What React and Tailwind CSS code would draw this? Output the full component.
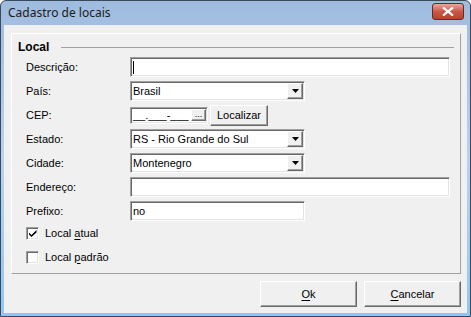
import React from "react";

const sunken =
  "bg-white border border-t-[#a0a0a0] border-l-[#a0a0a0] border-b-white border-r-white shadow-[inset_1px_1px_0_#696969,inset_-1px_-1px_0_#e3e3e3]";
const raised =
  "bg-[#f0f0f0] border border-t-white border-l-white border-b-[#696969] border-r-[#696969] shadow-[inset_-1px_-1px_0_#a0a0a0]";

function Arrow() {
  return (
    <svg width="7" height="4" viewBox="0 0 7 4">
      <polygon points="0,0 7,0 3.5,4" fill="#000" />
    </svg>
  );
}

function Select({ value, width = "w-[175px]" }) {
  return (
    <div className={`${sunken} ${width} h-[20px] flex items-center p-[1px]`}>
      <span className="flex-1 pl-[1px] leading-none">{value}</span>
      <div className={`${raised} w-[16px] h-[16px] flex items-center justify-center`}>
        <Arrow />
      </div>
    </div>
  );
}

function Row({ label, children, className = "" }) {
  return (
    <div className={`flex items-center h-[20px] ${className}`}>
      <span className="w-[104px]">{label}</span>
      {children}
    </div>
  );
}

function Checkbox({ checked, children }) {
  return (
    <div className="flex items-center h-[16px] gap-[6px]">
      <div className={`${sunken} w-[13px] h-[13px] flex items-center justify-center`}>
        {checked && (
          <svg width="8" height="8" viewBox="0 0 8 8">
            <path d="M0 3.5 L2.5 6 L7.5 1 L7.5 3.5 L2.5 8 L0 5.5 Z" fill="#000" />
          </svg>
        )}
      </div>
      <span>{children}</span>
    </div>
  );
}

export default function App() {
  return (
    <div className="w-[471px] h-[317px] font-['Liberation_Sans',Arial,sans-serif] text-[11px] text-black bg-white">
      <div className="w-full h-full flex flex-col border border-[#3a4a5c] rounded-t-[6px] bg-gradient-to-b from-[#9fbbde] via-[#b9d2ee] to-[#8ec8f0] px-[3px] pb-[3px]">
        {/* title bar */}
        <div className="h-[24px] flex items-center justify-between pl-[4px] pr-[3px]">
          <span className="font-['Noto_Sans',sans-serif] text-[12px] text-[#1b1b1b]">Cadastro de locais</span>
          <div className="w-[32px] h-[17px] mt-[-3px] rounded-[3px] border border-[#6e2a22] bg-gradient-to-b from-[#e5a79c] via-[#c9594a] to-[#b8412f] flex items-center justify-center">
            <svg width="12" height="9" viewBox="0 0 12 9">
              <path d="M1 0.5 L6 4.5 L11 0.5 M1 8.5 L6 4.5 L11 8.5" stroke="#fff" strokeWidth="2.2" fill="none" />
            </svg>
          </div>
        </div>

        {/* client area */}
        <div className="flex-1 bg-[#f0f0f0] flex flex-col">
          <div className="mt-[8px] mx-[7px] mr-[6px] h-[241px] border border-t-white border-l-white border-b-[#a0a0a0] border-r-[#a0a0a0] flex flex-col">
            <div className="flex items-center h-[14px] mt-[6px] pl-[6px] pr-[6px]">
              <span className="font-bold text-[12px] leading-none">Local</span>
              <div className="flex-1 ml-[12px] border-t border-[#a0a0a0]" />
            </div>

            <div className="flex flex-col gap-[4px] mt-[3px] pl-[14px]">
              <Row label="Descrição:">
                <div className={`${sunken} w-[320px] h-[20px] flex items-center pl-[2px]`}>
                  <div className="w-px h-[13px] bg-black" />
                </div>
              </Row>
              <Row label="País:">
                <Select value="Brasil" />
              </Row>
              <Row label="CEP:">
                <div className={`${sunken} w-[78px] h-[17px] flex items-center p-[1px]`}>
                  <span className="flex-1 min-w-0 overflow-hidden pl-[1px] leading-[13px] whitespace-pre">__.___-___</span>
                  <div className={`${raised} shrink-0 w-[15px] h-[12px] flex items-end justify-center text-[9px] leading-[9px] pb-[1px]`}>...</div>
                </div>
                <div className={`${raised} ml-[2px] w-[58px] h-[21px] flex items-center justify-center`}>
                  Localizar
                </div>
              </Row>
              <Row label="Estado:">
                <Select value="RS - Rio Grande do Sul" />
              </Row>
              <Row label="Cidade:">
                <Select value="Montenegro" />
              </Row>
              <Row label="Endereço:">
                <div className={`${sunken} w-[320px] h-[20px]`} />
              </Row>
              <Row label="Prefixo:">
                <div className={`${sunken} w-[175px] h-[20px] flex items-center pl-[2px]`}>no</div>
              </Row>
              <Checkbox checked>
                Local <u className="underline-offset-2">a</u>tual
              </Checkbox>
              <div className="mt-[4px]">
                <Checkbox>
                  Local <u className="underline-offset-2">p</u>adrão
                </Checkbox>
              </div>
            </div>
          </div>

          <div className="flex justify-end gap-[7px] mt-[7px] mr-[6px]">
            <div className={`${raised} w-[97px] h-[26px] flex items-center justify-center`}>
              <span>
                <u className="underline-offset-2">O</u>k
              </span>
            </div>
            <div className={`${raised} w-[97px] h-[26px] flex items-center justify-center`}>
              <span>
                <u className="underline-offset-2">C</u>ancelar
              </span>
            </div>
          </div>
        </div>
      </div>
    </div>
  );
}
